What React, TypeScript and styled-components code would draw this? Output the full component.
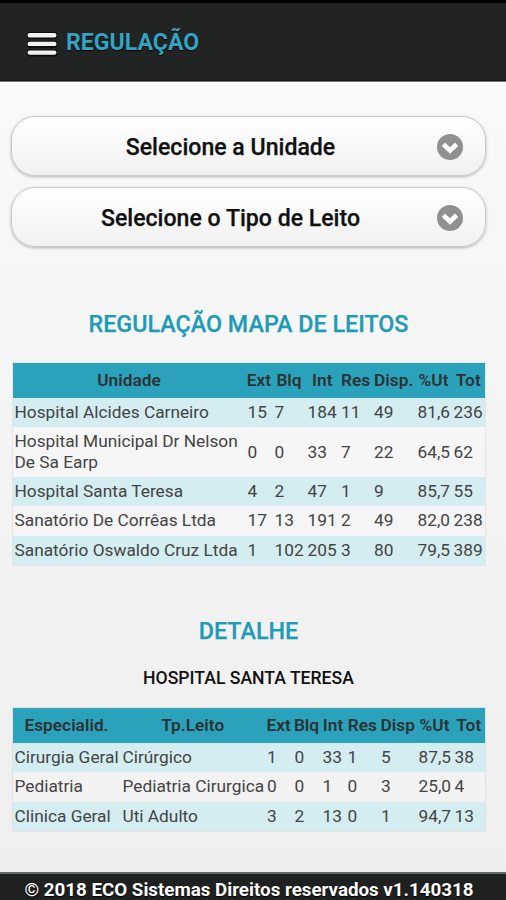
import React from 'react';
import styled, { createGlobalStyle } from 'styled-components';

const GlobalStyle = createGlobalStyle`
  * { box-sizing: border-box; }
  body { margin: 0; background: #eee; }
`;

const Screen = styled.div`
  display: flex;
  flex-direction: column;
  height: 900px;
  overflow: hidden;
  font-family: Roboto, "Liberation Sans", sans-serif;
  color: #333;
  background: linear-gradient(#f9f9f9 82px, #eeeeee 872px);
`;

const TopBar = styled.header`
  flex: none;
  display: flex;
  align-items: center;
  height: 82px;
  padding: 3px 27px 0 26px;
  gap: 8px;
  background: #222423;
  border-top: 3px solid #000;
  border-bottom: 1px solid #777;
  box-shadow: inset 0 -1px 0 #111, 0 2px 0 #fff;
`;

const MenuIcon = styled.svg`
  display: block;
  width: 32px;
  height: 28px;
`;

const BarTitle = styled.h1`
  margin: -1px 0 0;
  font-size: 23.1px;
  line-height: 28px;
  font-weight: 700;
  color: #35a4c3;
  text-shadow: 0 1px 1px #000;
`;

const Content = styled.main`
  flex: 1;
  min-height: 0;
  padding: 34px 20px 0 11px;
`;

const SelectButton = styled.button`
  display: flex;
  align-items: center;
  width: 475px;
  height: 60px;
  margin: 0 0 11px;
  padding: 1px 22px 0 12px;
  border: 1.5px solid #c9c9c9;
  border-radius: 24px;
  background: linear-gradient(#fff, #f1f1f1);
  box-shadow: 0 1px 3px rgba(0, 0, 0, 0.28);
  font-family: inherit;
  color: #111;
`;

const SelectLabel = styled.span`
  flex: 1;
  padding-top: 1px;
  font-size: 23.1px;
  font-weight: 500;
  -webkit-text-stroke: 0.25px #111;
  text-align: center;
`;

const ChevronIcon = styled.svg`
  flex: none;
  width: 26px;
  height: 26px;
`;

const SectionTitle = styled.h2<{ $top: number }>`
  margin: ${(p) => p.$top}px 0 0;
  font-size: 23.3px;
  line-height: 28px;
  font-weight: 500;
  text-align: center;
  color: #1e9bb6;
  -webkit-text-stroke: 0.25px #1e9bb6;
`;

const UnitName = styled.h3`
  margin: 22px 0 18.6px;
  font-size: 17.6px;
  line-height: 22px;
  font-weight: 500;
  text-align: center;
  color: #111;
`;

const Table = styled.table<{ $top?: number }>`
  width: 472.5px;
  margin: ${(p) => p.$top ?? 0}px 0 0 1.5px;
  table-layout: fixed;
  border-collapse: separate;
  border-spacing: 0;
  font-size: 17.3px;
  line-height: 21px;
  box-shadow: 0 0 0 1px rgba(0, 0, 0, 0.06);
`;

const Column = styled.col<{ $width: number }>`
  width: ${(p) => p.$width}px;
`;

const HeadCell = styled.th`
  height: 35px;
  padding: 0;
  font-weight: 600;
  text-align: center;
  white-space: nowrap;
  color: #2c3335;
  background: #2ba2bc;
`;

const Row = styled.tr<{ $tall?: boolean }>`
  height: ${(p) => (p.$tall ? 49.5 : 29.4)}px;
  &:nth-child(odd) { background: #d4edf0; }
  &:nth-child(even) { background: rgba(255, 255, 255, 0.2); }
`;

const Cell = styled.td`
  padding: 0 0 0 2px;
  vertical-align: middle;
  white-space: nowrap;
  color: #444;
`;

const NameCell = styled(Cell)`
  white-space: normal;
`;

const Footer = styled.footer`
  flex: none;
  height: 28px;
  padding-top: 3px;
  padding-right: 8px;
  border-top: 2px solid #666;
  background: #1f2120;
  font-size: 18.75px;
  line-height: 26px;
  font-weight: 700;
  text-align: center;
  white-space: nowrap;
  color: #fff;
  text-shadow: 0 1px 1px #000;
`;

type TableData = { widths: number[]; heads: string[]; rows: string[][] };

const units: TableData = {
  widths: [233, 27, 33, 33.5, 33, 43.5, 36, 33.5],
  heads: ['Unidade', 'Ext', 'Blq', 'Int', 'Res', 'Disp.', '%Ut', 'Tot'],
  rows: [
    ['Hospital Alcides Carneiro', '15', '7', '184', '11', '49', '81,6', '236'],
    ['Hospital Municipal Dr Nelson De Sa Earp', '0', '0', '33', '7', '22', '64,5', '62'],
    ['Hospital Santa Teresa', '4', '2', '47', '1', '9', '85,7', '55'],
    ['Sanatório De Corrêas Ltda', '17', '13', '191', '2', '49', '82,0', '238'],
    ['Sanatório Oswaldo Cruz Ltda', '1', '102', '205', '3', '80', '79,5', '389'],
  ],
};

const details: TableData = {
  widths: [108, 144.5, 27.5, 28, 25, 33.5, 37.5, 36, 32.5],
  heads: ['Especialid.', 'Tp.Leito', 'Ext', 'Blq', 'Int', 'Res', 'Disp', '%Ut', 'Tot'],
  rows: [
    ['Cirurgia Geral', 'Cirúrgico', '1', '0', '33', '1', '5', '87,5', '38'],
    ['Pediatria', 'Pediatria Cirurgica', '0', '0', '1', '0', '3', '25,0', '4'],
    ['Clinica Geral', 'Uti Adulto', '3', '2', '13', '0', '1', '94,7', '13'],
  ],
};

function BedTable({ data, top }: { data: TableData; top?: number }) {
  return (
    <Table $top={top}>
      <colgroup>
        {data.widths.map((w, i) => <Column key={i} $width={w} />)}
      </colgroup>
      <thead>
        <tr>{data.heads.map((h) => <HeadCell key={h}>{h}</HeadCell>)}</tr>
      </thead>
      <tbody>
        {data.rows.map(([name, ...values]) => (
          <Row key={name} $tall={name.length > 30}>
            <NameCell>{name}</NameCell>
            {values.map((v, i) => <Cell key={i}>{v}</Cell>)}
          </Row>
        ))}
      </tbody>
    </Table>
  );
}

function Select({ label }: { label: string }) {
  return (
    <SelectButton>
      <SelectLabel>{label}</SelectLabel>
      <ChevronIcon viewBox="0 0 26 26">
        <circle cx="13" cy="13" r="13" fill="#909090" />
        <path d="M6.4 10.3 13 16.5l6.6-6.2" fill="none" stroke="#fff" strokeWidth="4.6" />
      </ChevronIcon>
    </SelectButton>
  );
}

export default function App() {
  return (
    <Screen>
      <GlobalStyle />
      <TopBar>
        <MenuIcon viewBox="0 0 32 28">
          <g fill="none" strokeLinecap="round">
            <path d="M4 5.5h24M4 14.2h24M4 22.9h24" stroke="#0c0c0c" strokeWidth="7" />
            <path d="M3.7 5.2h24.6M3.7 13.9h24.6M3.7 22.6h24.6" stroke="#f2f2f2" strokeWidth="4.4" />
          </g>
        </MenuIcon>
        <BarTitle>REGULAÇÃO</BarTitle>
      </TopBar>
      <Content>
        <Select label="Selecione a Unidade" />
        <Select label="Selecione o Tipo de Leito" />
        <SectionTitle $top={63}>REGULAÇÃO MAPA DE LEITOS</SectionTitle>
        <BedTable data={units} top={25} />
        <SectionTitle $top={52.2}>DETALHE</SectionTitle>
        <UnitName>HOSPITAL SANTA TERESA</UnitName>
        <BedTable data={details} />
      </Content>
      <Footer>© 2018 ECO Sistemas Direitos reservados v1.140318</Footer>
    </Screen>
  );
}
